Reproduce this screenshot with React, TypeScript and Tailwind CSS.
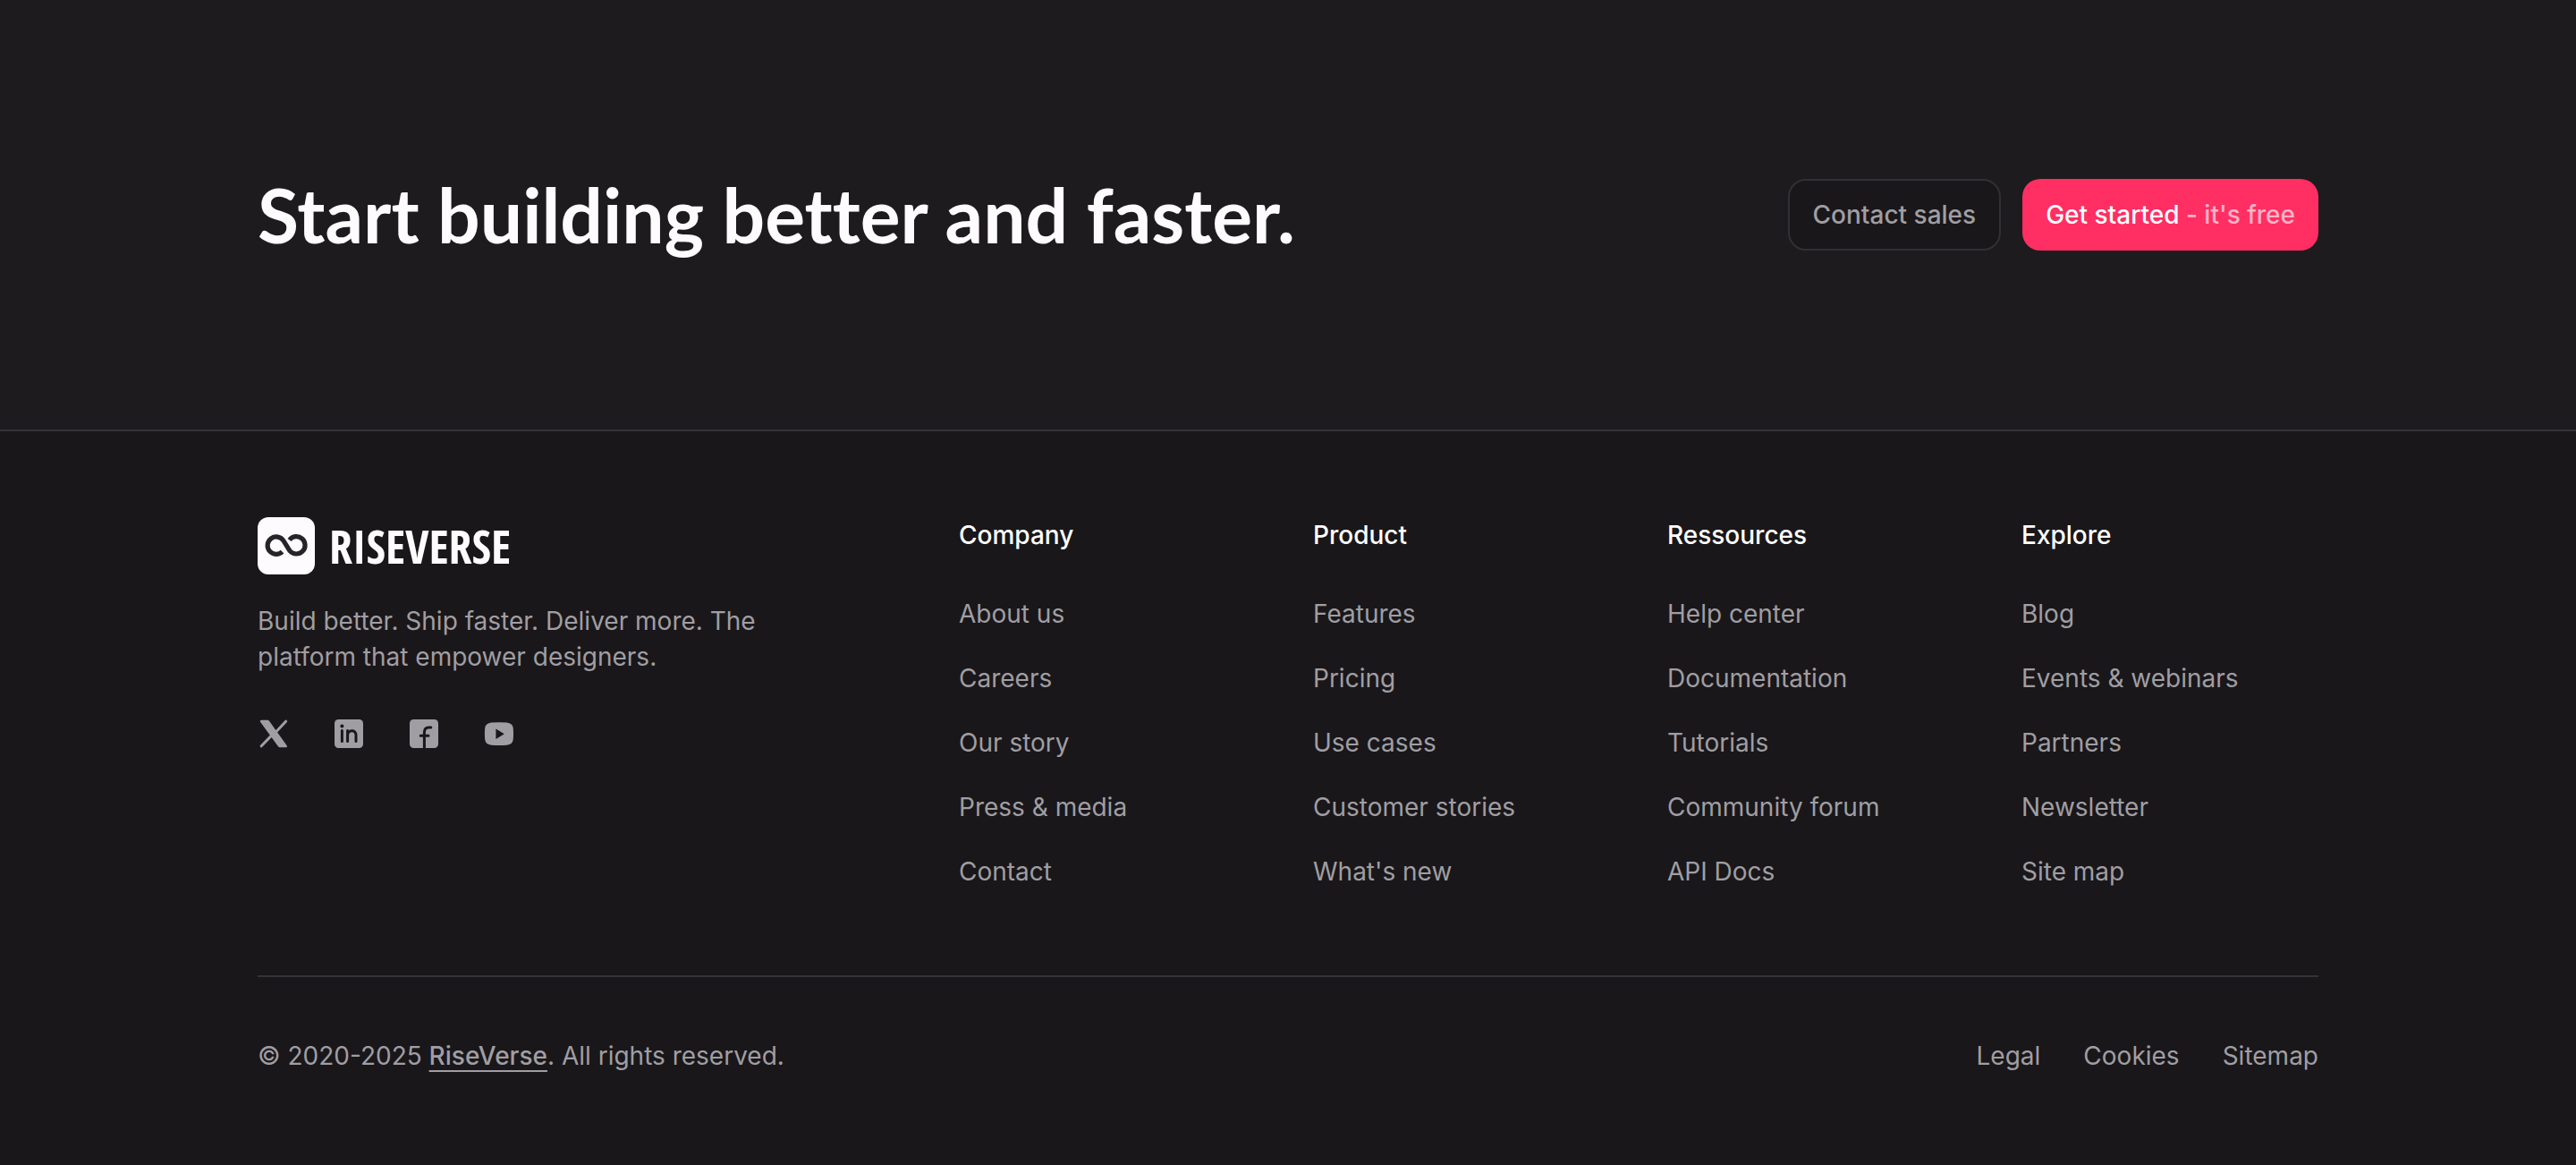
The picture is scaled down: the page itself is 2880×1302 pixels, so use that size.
import type { ReactNode } from "react";

const columns = [
  { title: "Company", links: ["About us", "Careers", "Our story", "Press & media", "Contact"] },
  { title: "Product", links: ["Features", "Pricing", "Use cases", "Customer stories", "What's new"] },
  { title: "Ressources", links: ["Help center", "Documentation", "Tutorials", "Community forum", "API Docs"] },
  { title: "Explore", links: ["Blog", "Events & webinars", "Partners", "Newsletter", "Site map"] },
];

const legalLinks = ["Legal", "Cookies", "Sitemap"];

function LogoMark() {
  return (
    <svg viewBox="0 0 64 64" className="size-16 shrink-0" aria-hidden="true">
      <rect width="64" height="64" rx="12" fill="#fdfbfe" />
      <path
        d="M27.6 38.6A9.7 9.7 0 1 1 29 26.4L36 37.6A9.7 9.7 0 1 0 35.6 25.5"
        fill="none"
        stroke="#262428"
        strokeWidth="5.2"
        strokeLinejoin="round"
      />
    </svg>
  );
}

function Icon({ children }: { children: ReactNode }) {
  return (
    <svg viewBox="0 0 36 36" className="size-9" fill="currentColor" aria-hidden="true">
      {children}
    </svg>
  );
}

const socials: { name: string; icon: ReactNode }[] = [
  {
    name: "X",
    icon: (
      <Icon>
        <path d="M4 2.8H11Q12.3 2.8 13 3.8L32.7 31.200Q33.600 33.200 31.600 33.200H25Q23.700 33.200 23 32.200L3 4.800Q2.200 3 4 2.800Z" />
        <path
          d="M31.6 4.2L19.8 16.8M16.2 19.4L4.2 31.8"
          fill="none"
          stroke="currentColor"
          strokeWidth="3"
          strokeLinecap="round"
        />
      </Icon>
    ),
  },
  {
    name: "LinkedIn",
    icon: (
      <Icon>
        <rect x="2" y="2" width="32" height="32" rx="4.5" />
        <circle cx="10.4" cy="9.6" r="2" fill="#19171a" />
        <path
          d="M10.4 14.5V26.5M16.6 14.5V26.5M16.6 19.5C16.6 13.6 26 12.6 26 19.5V26.5"
          fill="none"
          stroke="#19171a"
          strokeWidth="3"
          strokeLinecap="round"
        />
      </Icon>
    ),
  },
  {
    name: "Facebook",
    icon: (
      <Icon>
        <rect x="2" y="2" width="32" height="32" rx="4.5" />
        <path
          d="M18.4 34V16.5Q18.4 11 23.5 11H25.8M14.2 20.2H23"
          fill="none"
          stroke="#19171a"
          strokeWidth="3"
          strokeLinecap="round"
        />
      </Icon>
    ),
  },
  {
    name: "YouTube",
    icon: (
      <Icon>
        <path
          fillRule="evenodd"
          d="M9.5 5.6Q18 4.8 26.5 5.6Q33.2 6.2 33.8 12Q34.3 18.2 33.8 24Q33.2 30.2 26.5 30.7Q18 31.5 9.5 30.7Q2.7 30.2 2.1 24Q1.6 18.2 2.1 12Q2.7 6.2 9.5 5.6ZM14.4 12.4V24L23.8 18.2Z"
        />
      </Icon>
    ),
  },
];

export default function App() {
  return (
    <div className="min-h-screen bg-[#19171a] font-['Inter',sans-serif] text-[28px] leading-10 text-[#a09ea2]">
      <section className="border-b-2 border-[#343236] bg-[#1e1b1e] px-[10%] py-50">
        <div className="flex items-center justify-between">
          <h2 className="font-['Lato',sans-serif] text-[84px] leading-20 font-bold text-[#fdfbfe] [font-variant-ligatures:none]">
            Start building better and faster.
          </h2>
          <div className="flex gap-6 font-medium">
            <button
              type="button"
              className="h-20 rounded-[20px] border-2 border-[#323034] bg-[#19171a] px-[26px]"
            >
              Contact sales
            </button>
            <button type="button" className="h-20 rounded-[20px] bg-[#ff2e63] px-[26px] text-white">
              Get started <span className="text-[#ffb3c6]">- it's free</span>
            </button>
          </div>
        </div>
      </section>

      <footer className="px-[10%] pt-24">
        <div className="grid grid-cols-[720fr_332fr_332fr_332fr_332fr] gap-16 pb-24">
          <div>
            <a href="#" className="flex items-center gap-4">
              <LogoMark />
              <span className="font-['Open_Sans_Condensed','Roboto_Condensed',sans-serif] text-[52px] leading-[60px] font-bold text-[#fdfbfe]">
                RISEVERSE
              </span>
            </a>
            <p className="mt-8 max-w-[600px]">
              Build better. Ship faster. Deliver more. The platform that empower designers.
            </p>
            <div className="mt-12 flex gap-12">
              {socials.map((s) => (
                <a key={s.name} href="#" aria-label={s.name}>
                  {s.icon}
                </a>
              ))}
            </div>
          </div>
          {columns.map((col) => (
            <nav key={col.title} aria-label={col.title}>
              <h3 className="font-medium text-white">{col.title}</h3>
              <ul className="mt-12 flex flex-col gap-8">
                {col.links.map((link) => (
                  <li key={link}>
                    <a href="#">{link}</a>
                  </li>
                ))}
              </ul>
            </nav>
          ))}
        </div>

        <div className="flex items-center justify-between border-t-2 border-[#343236] py-17">
          <p>
            © 2020-2025{" "}
            <a
              href="#"
              className="font-medium underline decoration-2 underline-offset-[6px] [text-decoration-skip-ink:none]"
            >
              RiseVerse
            </a>
            . All rights reserved.
          </p>
          <div className="flex gap-12">
            {legalLinks.map((link) => (
              <a key={link} href="#">
                {link}
              </a>
            ))}
          </div>
        </div>
      </footer>
    </div>
  );
}
